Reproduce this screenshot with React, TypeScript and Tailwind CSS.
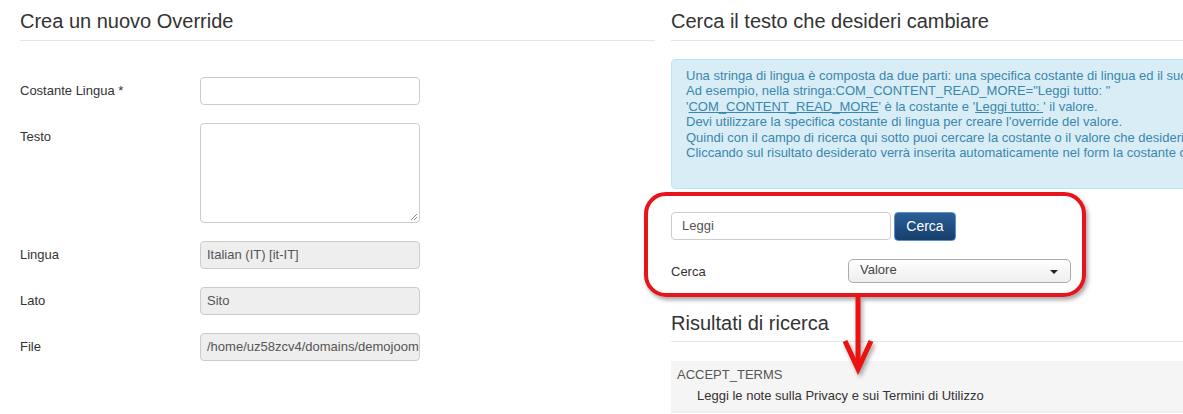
const font = { fontFamily: '"Liberation Sans", Arial, sans-serif' };

function FieldRow({ label, children, tall }: { label: string; children: React.ReactNode; tall?: boolean }) {
  return (
    <div className={`flex ${tall ? 'mb-[19px]' : 'mb-[18px]'}`}>
      <label className="w-[180px] shrink-0 pt-[5px] text-[13px] leading-[18px] text-[#333]">{label}</label>
      {children}
    </div>
  );
}

function ReadOnly({ value }: { value: string }) {
  return (
    <div className="h-[28px] w-[220px] overflow-hidden whitespace-nowrap rounded-[4px] border border-[#ccc] bg-[#eee] px-[6px] text-[13px] leading-[26px] text-[#555]">
      {value}
    </div>
  );
}

function Heading({ children }: { children: React.ReactNode }) {
  return (
    <h3 className="h-[41px] border-b border-[#e5e5e5] pt-[9px] text-[20px] leading-[24px] text-[#333]">{children}</h3>
  );
}

export default function App() {
  return (
    <div className="relative flex h-[414px] w-[1183px] overflow-hidden bg-white" style={font}>
      {/* colonna sinistra */}
      <div className="w-[655px] shrink-0 pl-5">
        <Heading>Crea un nuovo Override</Heading>
        <div className="mt-[36px]">
          <FieldRow label="Costante Lingua *">
            <div className="h-[28px] w-[220px] rounded-[4px] border border-[#ccc] bg-white" />
          </FieldRow>
          <FieldRow label="Testo">
            <div className="relative h-[100px] w-[220px] rounded-[4px] border border-[#ccc] bg-white">
              <svg className="absolute bottom-[1px] right-[1px]" width="8" height="8" viewBox="0 0 8 8">
                <path d="M7 1 L1 7 M7 4 L4 7" stroke="#888" strokeWidth="1" />
              </svg>
            </div>
          </FieldRow>
          <FieldRow label="Lingua">
            <ReadOnly value="Italian (IT) [it-IT]" />
          </FieldRow>
          <FieldRow label="Lato">
            <ReadOnly value="Sito" />
          </FieldRow>
          <FieldRow label="File">
            <ReadOnly value="/home/uz58zcv4/domains/demojoomla/public_html/language/overrides/it-IT.override.ini" />
          </FieldRow>
        </div>
      </div>

      {/* colonna destra */}
      <div className="ml-4 w-[640px] shrink-0">
        <Heading>Cerca il testo che desideri cambiare</Heading>
        <div className="mt-[18px] h-[130px] rounded-[4px] border border-[#bce8f1] bg-[#d9edf7] px-[14px] pt-[8px] text-[13px] leading-[15.4px] text-[#3a87ad] whitespace-nowrap">
          <div>Una stringa di lingua è composta da due parti: una specifica costante di lingua ed il suo valore.</div>
          <div>Ad esempio, nella stringa:COM_CONTENT_READ_MORE="Leggi tutto: "</div>
          <div>
            '<span className="underline">COM_CONTENT_READ_MORE</span>' è la costante e '
            <span className="underline">Leggi tutto: </span>' il valore.
          </div>
          <div>Devi utilizzare la specifica costante di lingua per creare l'override del valore.</div>
          <div>Quindi con il campo di ricerca qui sotto puoi cercare la costante o il valore che desideri cambiare.</div>
          <div>Cliccando sul risultato desiderato verrà inserita automaticamente nel form la costante corretta.</div>
        </div>

        <div className="mt-[23px] flex items-start gap-[3px]">
          <div className="h-[28px] w-[220px] rounded-[4px] border border-[#ccc] bg-white px-[10px] text-[13px] leading-[26px] text-[#555]">
            Leggi
          </div>
          <button className="h-[29px] w-[62px] rounded-[4px] border border-[#5b8fd0] bg-gradient-to-b from-[#2c5f97] to-[#163f6c] text-[14px] text-white">
            Cerca
          </button>
        </div>

        <div className="mt-[18px] flex items-center">
          <span className="w-[177px] shrink-0 pt-[1px] text-[13px] text-[#333]">Cerca</span>
          <div className="relative h-[24px] w-[223px] rounded-[5px] border border-[#aaa] bg-gradient-to-b from-white to-[#eeeeee] px-[11px] text-[13px] leading-[19px] text-[#444]">
            Valore
            <svg className="absolute right-[12px] top-[10px]" width="8" height="4" viewBox="0 0 8 4">
              <path d="M0 0 L8 0 L4 4 Z" fill="#222" />
            </svg>
          </div>
        </div>

        <div className="mt-[28px]">
          <h3 className="h-[31px] border-b border-[#e5e5e5] text-[20px] leading-[24px] text-[#333]">Risultati di ricerca</h3>
        </div>
        <div className="mt-[19px] border-b-2 border-[#eee] bg-[#f5f5f5] px-[6px] pb-[6px] pt-[5px] text-[13px] leading-[18px]">
          <div className="text-[#555]">ACCEPT_TERMS</div>
          <div className="mt-[3px] pl-[20px] text-[#333]">Leggi le note sulla Privacy e sui Termini di Utilizzo</div>
        </div>
      </div>

      {/* evidenziazione rossa sovrapposta */}
      <div className="pointer-events-none absolute left-[644px] top-[192px] h-[105px] w-[442px] rounded-[22px] border-4 border-[#e8141b] shadow-[2px_3px_4px_rgba(0,0,0,0.35)]" />
      <svg
        className="pointer-events-none absolute left-[838px] top-[297px] drop-shadow-[2px_3px_2px_rgba(0,0,0,0.35)]"
        width="42"
        height="80"
        viewBox="0 0 42 80"
      >
        <path d="M20 0 L20 72" stroke="#ee1111" strokeWidth="5" />
        <path d="M7 44 L20 72 L33 44" stroke="#ee1111" strokeWidth="5" fill="none" strokeLinejoin="miter" />
      </svg>
    </div>
  );
}
